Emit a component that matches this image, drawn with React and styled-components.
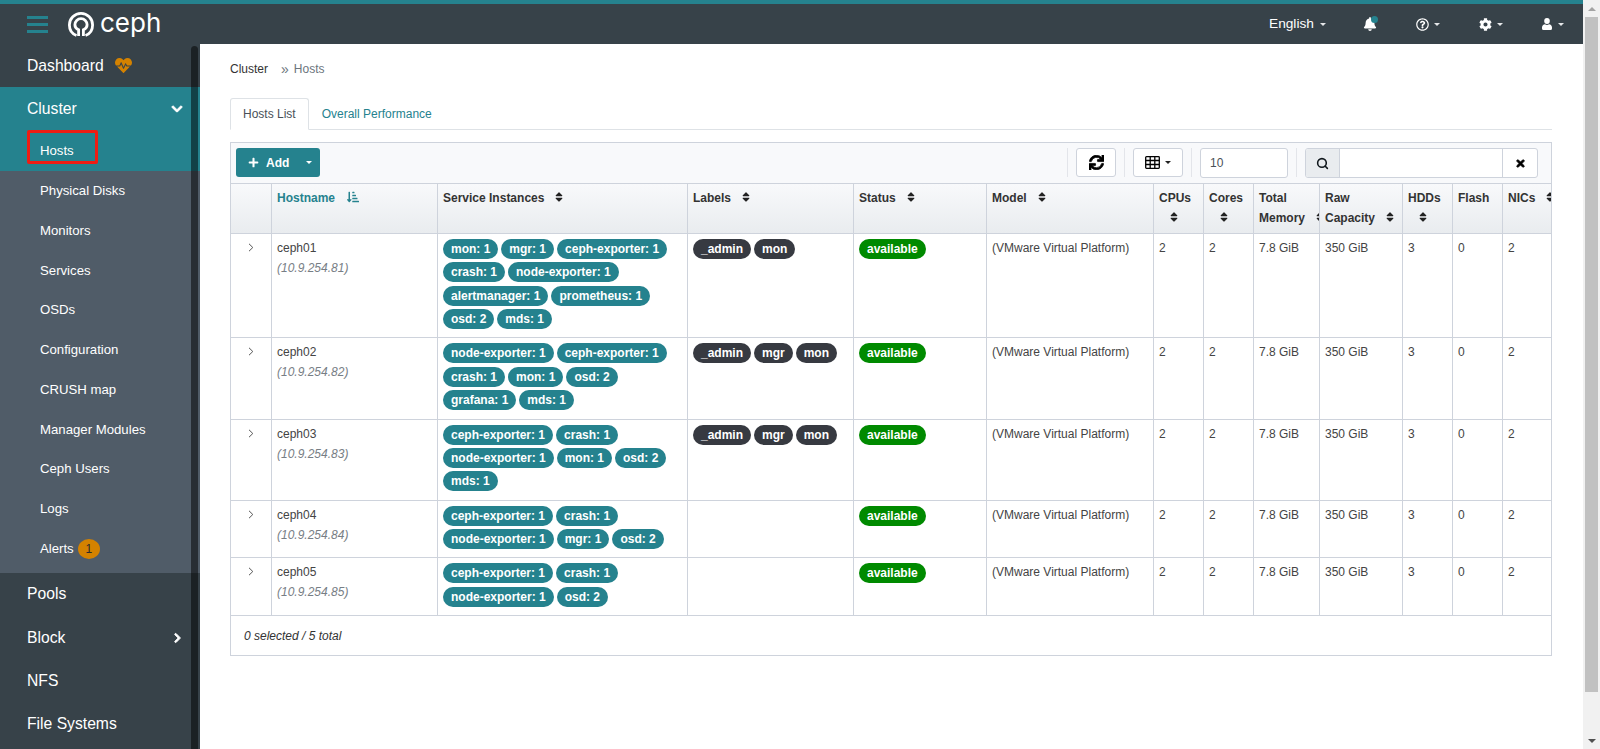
import React from "react";
import styled, { createGlobalStyle } from "styled-components";
import { Search } from "lucide-react";
import {
  FaBell,
  FaChevronDown,
  FaChevronRight,
  FaCog,
  FaHeartbeat,
  FaPlus,
  FaRegQuestionCircle,
  FaSort,
  FaSortAmountDownAlt,
  FaSync,
  FaTimes,
} from "react-icons/fa";

const TEAL = "#25828e";
const DARK = "#374249";
const LINE = "#ced3dc";

const GlobalStyle = createGlobalStyle`
  html, body {
    margin: 0;
    height: 100%;
    overflow: hidden;
    background: #fff;
  }
  body {
    font: 12px/20px "Liberation Sans", Arial, sans-serif;
    color: #333;
  }
  *, *::before, *::after {
    box-sizing: border-box;
  }
`;

const Page = styled.div`
  display: flex;
  height: 749px;
  overflow: hidden;
`;

const Column = styled.div`
  flex: 1;
  min-width: 0;
  display: flex;
  flex-direction: column;
`;

const PageScroll = styled.div`
  width: 17px;
  flex: none;
  display: flex;
  flex-direction: column;
  background: #f1f1f1;
`;

const ScrollArrow = styled.div`
  height: 17px;
  flex: none;
  display: flex;
  align-items: center;
  justify-content: center;
  &::before {
    content: "";
    border-left: 4px solid transparent;
    border-right: 4px solid transparent;
    ${(p) =>
      p.$down
        ? "border-top: 4px solid #505050;"
        : "border-bottom: 4px solid #a3a3a3;"}
  }
`;

const ScrollThumb = styled.div`
  height: 675px;
  margin: 0 2px;
  background: #c1c1c1;
`;

const ScrollRest = styled.div`
  flex: 1;
`;

const Navbar = styled.header`
  height: 44px;
  flex: none;
  display: flex;
  align-items: center;
  border-top: 4px solid ${TEAL};
  background: ${DARK};
  color: #fff;
`;

const Burger = styled.div`
  width: 21px;
  margin-left: 27px;
  display: flex;
  flex-direction: column;
  gap: 4px;
  span {
    display: block;
    height: 3px;
    background: ${TEAL};
  }
`;

const Logo = styled.div`
  display: flex;
  align-items: center;
  margin-left: 20px;
  gap: 6px;
`;

const LogoWord = styled.span`
  font: 400 26px/30px Inter, "Liberation Sans", sans-serif;
  color: #fff;
  margin-top: -3px;
`;

const NavRight = styled.div`
  margin-left: auto;
  display: flex;
  align-items: center;
`;

const NavItem = styled.div`
  width: ${(p) => p.$w}px;
  display: flex;
  align-items: center;
  font-size: 13.7px;
  position: relative;
`;

const Caret = styled.span`
  display: inline-block;
  margin-left: ${(p) => p.$gap ?? 6}px;
  border-top: 3.5px solid ${(p) => p.$color ?? "#e6e8ea"};
  border-left: 3.5px solid transparent;
  border-right: 3.5px solid transparent;
`;

const BellDot = styled.span`
  position: absolute;
  left: 7.5px;
  top: -1.5px;
  width: 7.5px;
  height: 7.5px;
  border-radius: 50%;
  background: ${TEAL};
`;

const Body = styled.div`
  flex: 1;
  min-height: 0;
  display: flex;
`;

const Sidebar = styled.nav`
  width: 200px;
  flex: none;
  position: relative;
  overflow: hidden;
  background: ${DARK};
  color: #fff;
`;

const SideScroll = styled.div`
  position: absolute;
  left: 191px;
  top: 2px;
  bottom: 0;
  width: 7px;
  border-radius: 4px 4px 0 0;
  background: rgba(0, 0, 0, 0.5);
`;

const TopItem = styled.div`
  height: 43.35px;
  display: flex;
  align-items: center;
  padding-left: 27px;
  font-size: 15.7px;
  background: ${(p) => (p.$open ? TEAL : "transparent")};
  position: relative;
`;

const HeartIcon = styled(FaHeartbeat)`
  color: #d48200;
  font-size: 17px;
  margin-left: 11px;
`;

const ChevronSlot = styled.span`
  position: absolute;
  left: ${(p) => p.$left}px;
  top: 50%;
  transform: translateY(-50%);
  display: flex;
  font-size: ${(p) => p.$size}px;
  svg {
    stroke: currentColor;
    stroke-width: 40;
  }
`;

const SubMenu = styled.div`
  background: #505c68;
  padding-bottom: 4px;
`;

const SubItem = styled.div`
  height: 39.75px;
  display: flex;
  align-items: center;
  padding-left: 40px;
  font-size: 13.2px;
  position: relative;
  ${(p) =>
    p.$active &&
    `
    background: ${TEAL};
    height: 41px;
    margin-top: -0.5px;
    &::after {
      content: "";
      position: absolute;
      left: 27px;
      top: 0;
      width: 71px;
      height: 34px;
      border: 3px solid #ee1c14;
      border-radius: 2px;
    }
  `}
`;

const AlertCount = styled.span`
  width: 22px;
  height: 20px;
  margin-left: 4px;
  border-radius: 50%;
  background: #d48200;
  color: #2b2b2b;
  font-size: 12px;
  line-height: 20px;
  text-align: center;
`;

const Main = styled.main`
  flex: 1;
  min-width: 0;
  padding: 15px 31px 0 30px;
`;

const Breadcrumb = styled.div`
  display: flex;
  height: 20px;
  color: #6c757d;
  b {
    font-weight: 400;
    color: #333;
    margin-right: 13px;
  }
  i {
    font-style: normal;
    font-size: 14px;
    margin-right: 5px;
  }
`;

const Tabs = styled.div`
  display: flex;
  height: 32px;
  margin-top: 19px;
  border-bottom: 1px solid #dee2e6;
`;

const Tab = styled.div`
  height: 32px;
  padding: 0 12px;
  display: flex;
  align-items: center;
  border: 1px solid ${(p) => (p.$active ? "#dee2e6" : "transparent")};
  border-bottom-color: ${(p) => (p.$active ? "#fff" : "transparent")};
  border-radius: 3px 3px 0 0;
  color: ${(p) => (p.$active ? "#495057" : TEAL)};
  background: ${(p) => (p.$active ? "#fff" : "transparent")};
`;

const TableBox = styled.section`
  margin-top: 12px;
  border: 1px solid ${LINE};
`;

const Toolbar = styled.div`
  height: 41px;
  padding: 5px 13px 5px 5px;
  display: flex;
  align-items: flex-start;
  background: #f8f9fb;
  border-bottom: 1px solid ${LINE};
`;

const AddButton = styled.div`
  width: 84px;
  height: 29px;
  display: flex;
  align-items: center;
  padding-left: 12px;
  border-radius: 3px;
  background: ${TEAL};
  color: #fff;
  font-weight: 700;
  svg {
    font-size: 11px;
    margin-right: 7px;
  }
`;

const ToolRight = styled.div`
  margin-left: auto;
  display: flex;
`;

const ToolGroup = styled.div`
  display: flex;
  height: 29px;
  padding: 0 ${(p) => (p.$last ? 0 : 8)}px 0 8px;
  border-left: 1px solid #e3e5ea;
`;

const IconButton = styled.div`
  width: ${(p) => p.$w}px;
  height: 29px;
  display: flex;
  align-items: center;
  justify-content: center;
  background: #fff;
  border: 1px solid ${LINE};
  border-radius: 3px;
  color: #000;
`;

const RefreshIcon = styled(FaSync)`
  font-size: 15px;
  stroke: currentColor;
  stroke-width: 25;
`;

const LimitInput = styled.div`
  width: 88px;
  height: 30px;
  padding-left: 9px;
  display: flex;
  align-items: center;
  background: #fff;
  border: 1px solid ${LINE};
  border-radius: 3px;
  color: #495057;
`;

const SearchGroup = styled.div`
  width: 233px;
  height: 30px;
  display: flex;
  background: #fff;
  border: 1px solid ${LINE};
  border-radius: 3px;
  overflow: hidden;
`;

const SearchAddon = styled.div`
  width: 34px;
  display: flex;
  align-items: center;
  justify-content: center;
  background: #e9ecef;
  border-right: 1px solid ${LINE};
  color: #11181d;
`;

const SearchField = styled.div`
  flex: 1;
  border-right: 1px solid ${LINE};
`;

const SearchClear = styled.div`
  width: 34px;
  display: flex;
  align-items: center;
  justify-content: center;
  color: #000;
  font-size: 11px;
  svg {
    stroke: currentColor;
    stroke-width: 40;
  }
`;

const Table = styled.table`
  width: 1320px;
  table-layout: fixed;
  border-collapse: separate;
  border-spacing: 0;
`;

const Col = styled.col`
  width: ${(p) => p.$w}px;
`;

const Th = styled.th`
  height: 50px;
  padding: 4px 5px 5px;
  overflow: hidden;
  vertical-align: top;
  text-align: left;
  font-weight: 700;
  color: ${(p) => (p.$sorted ? TEAL : "#333")};
  background: linear-gradient(#f8f9fb, #e9ecef);
  border-right: 1px solid ${LINE};
  border-bottom: 1px solid ${LINE};
  &:last-child {
    border-right: none;
  }
`;

const NoWrap = styled.span`
  white-space: nowrap;
`;

const SortIcon = styled(FaSort)`
  font-size: 12px;
  margin-left: 9px;
  vertical-align: -1px;
  color: #222;
`;

const SortedIcon = styled(FaSortAmountDownAlt)`
  font-size: 12px;
  margin-left: 12px;
  vertical-align: -1px;
`;

const Td = styled.td`
  padding: 4px 5px 0;
  vertical-align: top;
  overflow: hidden;
  color: #444;
  border-right: 1px solid ${LINE};
  border-bottom: 1px solid ${LINE};
  &:last-child {
    border-right: none;
  }
`;

const BadgeCell = styled(Td)`
  padding: 5px 5px 8.3px;
`;

const ExpandCell = styled(Td)`
  text-align: center;
  padding-left: 0;
  padding-right: 0;
`;

const Chevron = styled.svg`
  width: 6px;
  height: 9px;
  margin-top: 5px;
  display: inline-block;
  vertical-align: top;
`;

const HostIp = styled.div`
  font-style: italic;
  color: #777e85;
`;

const BadgeRow = styled.div`
  display: flex;
  flex-wrap: wrap;
  gap: 3.4px 3px;
`;

const Badge = styled.span`
  height: 20px;
  padding: 0 8px;
  border-radius: 10px;
  background: ${(p) => p.$bg};
  color: #fff;
  font-weight: 700;
  line-height: 20px;
  white-space: nowrap;
`;

const TableFooter = styled.div`
  height: 39px;
  padding: 1px 0 0 13px;
  display: flex;
  align-items: center;
  font-style: italic;
  color: #333;
`;

const columns = [41, 166, 250, 166, 133, 167, 50, 50, 66, 83, 50, 50, 48];

// lead wraps freely, tail stays on one line with its sort icon
const headers = [
  { tail: "Service Instances" },
  { tail: "Labels" },
  { tail: "Status" },
  { tail: "Model" },
  { lead: "CPUs", sort: "wrap" },
  { lead: "Cores", sort: "wrap" },
  { lead: "Total ", tail: "Memory" },
  { lead: "Raw ", tail: "Capacity" },
  { lead: "HDDs", sort: "wrap" },
  { lead: "Flash", sort: "none" },
  { tail: "NICs" },
];

const hosts = [
  {
    name: "ceph01",
    ip: "10.9.254.81",
    services: ["mon: 1", "mgr: 1", "ceph-exporter: 1", "crash: 1", "node-exporter: 1", "alertmanager: 1", "prometheus: 1", "osd: 2", "mds: 1"],
    labels: ["_admin", "mon"],
  },
  {
    name: "ceph02",
    ip: "10.9.254.82",
    services: ["node-exporter: 1", "ceph-exporter: 1", "crash: 1", "mon: 1", "osd: 2", "grafana: 1", "mds: 1"],
    labels: ["_admin", "mgr", "mon"],
  },
  {
    name: "ceph03",
    ip: "10.9.254.83",
    services: ["ceph-exporter: 1", "crash: 1", "node-exporter: 1", "mon: 1", "osd: 2", "mds: 1"],
    labels: ["_admin", "mgr", "mon"],
  },
  {
    name: "ceph04",
    ip: "10.9.254.84",
    services: ["ceph-exporter: 1", "crash: 1", "node-exporter: 1", "mgr: 1", "osd: 2"],
    labels: [],
  },
  {
    name: "ceph05",
    ip: "10.9.254.85",
    services: ["ceph-exporter: 1", "crash: 1", "node-exporter: 1", "osd: 2"],
    labels: [],
  },
];

const subItems = ["Physical Disks", "Monitors", "Services", "OSDs", "Configuration", "CRUSH map", "Manager Modules", "Ceph Users", "Logs"];

const CephMark = () => (
  <svg width="26" height="25" viewBox="0 0 26 25" fill="none" stroke="#fff" strokeWidth="2.8">
    <path d="M8.5 23.5C4 21.8 1.4 17.6 1.4 13a11.6 11.6 0 0 1 23.2 0c0 4.6-2.6 8.8-7.1 10.5" />
    <path d="M10.6 24v-6.3C8.2 16.8 6.9 14.8 6.9 12.7a6.1 6.1 0 0 1 12.2 0c0 2.1-1.3 4.1-3.7 5V24" />
  </svg>
);

const UserIcon = () => (
  <svg width="10" height="12" viewBox="0 0 10 12" fill="#fff">
    <ellipse cx="5" cy="3" rx="2.8" ry="3" />
    <path d="M0 10.5V9.5C0 7.5 1.3 6.3 3 6.2 4.2 7.3 5.8 7.3 7 6.2 8.7 6.3 10 7.5 10 9.5V10.5Q10 12 8.5 12H1.5Q0 12 0 10.5Z" />
  </svg>
);

const GridIcon = () => (
  <svg width="15" height="13" viewBox="0 0 15 13" fill="none" stroke="#000" strokeWidth="1.3">
    <rect x="0.7" y="0.7" width="13.6" height="11.6" rx="0.8" />
    <path d="M0.7 4.5H14.3M0.7 8.5H14.3M5.2 0.7V12.3M9.8 0.7V12.3" />
  </svg>
);

const App = () => (
  <Page>
    <GlobalStyle />
    <Column>
      <Navbar>
        <Burger>
          <span />
          <span />
          <span />
        </Burger>
        <Logo>
          <CephMark />
          <LogoWord>ceph</LogoWord>
        </Logo>
        <NavRight>
          <NavItem $w={94}>
            English
            <Caret />
          </NavItem>
          <NavItem $w={53}>
            <FaBell size={14} />
            <BellDot />
          </NavItem>
          <NavItem $w={63}>
            <FaRegQuestionCircle size={13} />
            <Caret $gap={5} />
          </NavItem>
          <NavItem $w={63}>
            <FaCog size={13} />
            <Caret $gap={5} />
          </NavItem>
          <NavItem $w={41}>
            <UserIcon />
            <Caret $gap={6} />
          </NavItem>
        </NavRight>
      </Navbar>
      <Body>
        <Sidebar>
          <TopItem>
            Dashboard
            <HeartIcon />
          </TopItem>
          <TopItem $open>
            Cluster
            <ChevronSlot $left={171} $size={12}>
              <FaChevronDown />
            </ChevronSlot>
          </TopItem>
          <SubItem $active>Hosts</SubItem>
          <SubMenu>
            {subItems.map((item) => (
              <SubItem key={item}>{item}</SubItem>
            ))}
            <SubItem>
              Alerts
              <AlertCount>1</AlertCount>
            </SubItem>
          </SubMenu>
          <TopItem>Pools</TopItem>
          <TopItem>
            Block
            <ChevronSlot $left={172} $size={11}>
              <FaChevronRight />
            </ChevronSlot>
          </TopItem>
          <TopItem>NFS</TopItem>
          <TopItem>File Systems</TopItem>
          <SideScroll />
        </Sidebar>
        <Main>
          <Breadcrumb>
            <b>Cluster</b>
            <i>»</i>
            Hosts
          </Breadcrumb>
          <Tabs>
            <Tab $active>Hosts List</Tab>
            <Tab>Overall Performance</Tab>
          </Tabs>
          <TableBox>
            <Toolbar>
              <AddButton>
                <FaPlus />
                Add
                <Caret $gap={17} $color="#fff" />
              </AddButton>
              <ToolRight>
                <ToolGroup>
                  <IconButton $w={40}>
                    <RefreshIcon />
                  </IconButton>
                </ToolGroup>
                <ToolGroup>
                  <IconButton $w={50}>
                    <GridIcon />
                    <Caret $gap={5} $color="#222" />
                  </IconButton>
                </ToolGroup>
                <ToolGroup>
                  <LimitInput>10</LimitInput>
                </ToolGroup>
                <ToolGroup $last>
                  <SearchGroup>
                    <SearchAddon>
                      <Search size={13} strokeWidth={2.9} />
                    </SearchAddon>
                    <SearchField />
                    <SearchClear>
                      <FaTimes />
                    </SearchClear>
                  </SearchGroup>
                </ToolGroup>
              </ToolRight>
            </Toolbar>
            <Table>
              <colgroup>
                {columns.map((w, i) => (
                  <Col key={i} $w={w} />
                ))}
              </colgroup>
              <thead>
                <tr>
                  <Th />
                  <Th $sorted>
                    Hostname
                    <SortedIcon />
                  </Th>
                  {headers.map((h) => (
                    <Th key={h.lead ?? h.tail}>
                      {h.lead}
                      {h.sort === "wrap" && <SortIcon />}
                      {h.tail && (
                        <NoWrap>
                          {h.tail}
                          <SortIcon />
                        </NoWrap>
                      )}
                    </Th>
                  ))}
                </tr>
              </thead>
              <tbody>
                {hosts.map((host) => (
                  <tr key={host.name}>
                    <ExpandCell>
                      <Chevron viewBox="0 0 6 9" fill="none" stroke="#555" strokeWidth="1">
                        <path d="M1 .8 4.8 4.5 1 8.2" />
                      </Chevron>
                    </ExpandCell>
                    <Td>
                      {host.name}
                      <HostIp>({host.ip})</HostIp>
                    </Td>
                    <BadgeCell>
                      <BadgeRow>
                        {host.services.map((s) => (
                          <Badge key={s} $bg={TEAL}>
                            {s}
                          </Badge>
                        ))}
                      </BadgeRow>
                    </BadgeCell>
                    <BadgeCell>
                      <BadgeRow>
                        {host.labels.map((l) => (
                          <Badge key={l} $bg="#373a41">
                            {l}
                          </Badge>
                        ))}
                      </BadgeRow>
                    </BadgeCell>
                    <BadgeCell>
                      <BadgeRow>
                        <Badge $bg="#008a00">available</Badge>
                      </BadgeRow>
                    </BadgeCell>
                    <Td>(VMware Virtual Platform)</Td>
                    <Td>2</Td>
                    <Td>2</Td>
                    <Td>7.8 GiB</Td>
                    <Td>350 GiB</Td>
                    <Td>3</Td>
                    <Td>0</Td>
                    <Td>2</Td>
                  </tr>
                ))}
              </tbody>
            </Table>
            <TableFooter>0 selected / 5 total</TableFooter>
          </TableBox>
        </Main>
      </Body>
    </Column>
    <PageScroll>
      <ScrollArrow />
      <ScrollThumb />
      <ScrollRest />
      <ScrollArrow $down />
    </PageScroll>
  </Page>
);

export default App;
